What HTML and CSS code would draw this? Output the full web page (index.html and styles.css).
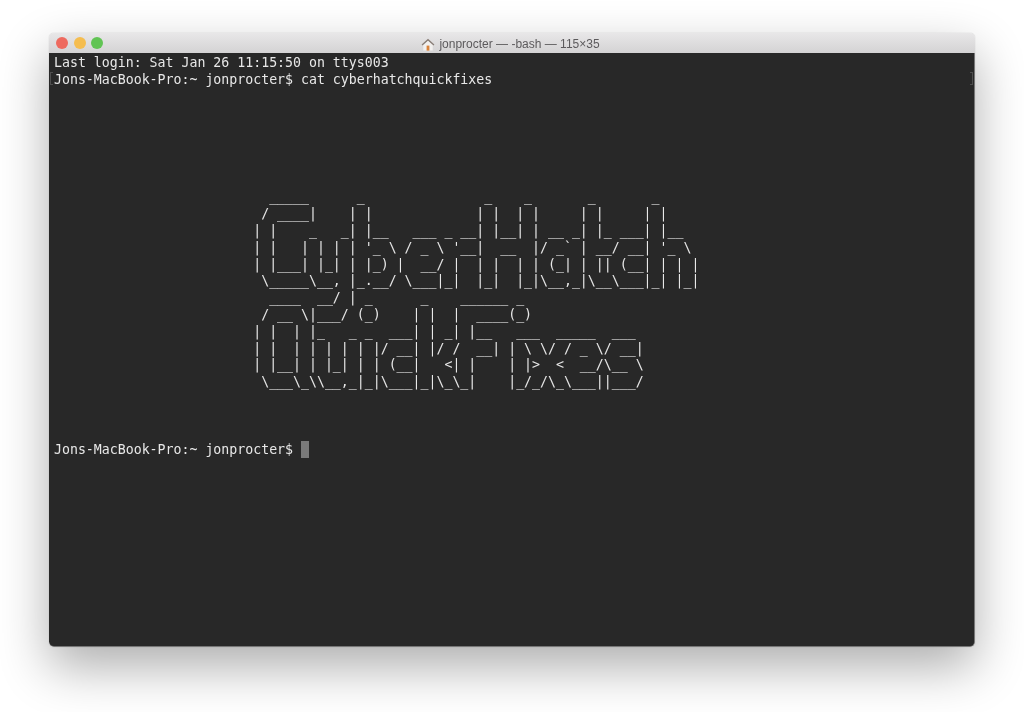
FILE: index.html
```html
<!DOCTYPE html>
<html lang="en">
<head>
    <meta charset="UTF-8">
    <meta name="viewport" content="width=device-width, initial-scale=1.0">
    <title>jonprocter — -bash — 115×35</title>
    <link rel="stylesheet" href="styles.css">
</head>
<body>
    <div class="window">
        <div class="titlebar">
            <div class="lights">
                <span class="light red"></span>
                <span class="light yellow"></span>
                <span class="light green"></span>
            </div>
            <div class="title">
                <svg class="home" width="14" height="13" viewBox="0 0 14 13">
                    <path d="M7 0.8 L0.6 6.6 L1.5 7.6 L7 2.7 L12.5 7.6 L13.4 6.6 Z" fill="#8a7f78"/>
                    <path d="M2.3 7.2 L7 3 L11.7 7.2 V12.6 H2.3 Z" fill="#f2f0ee"/>
                    <rect x="5.6" y="7.6" width="2.8" height="5" fill="#d9823a"/>
                </svg>
                <span>jonprocter — -bash — 115×35</span>
            </div>
        </div>
        <div class="terminal">
            <span class="mark mark-left"></span>
            <span class="mark mark-right"></span>
<pre class="screen">Last login: Sat Jan 26 11:15:50 on ttys003
Jons-MacBook-Pro:~ jonprocter$ cat cyberhatchquickfixes






                           _____      _               _    _       _       _
                          / ____|    | |             | |  | |     | |     | |
                         | |    _   _| |__   ___ _ __| |__| | __ _| |_ ___| |__
                         | |   | | | | '_ \ / _ \ '__|  __  |/ _` | __/ __| '_ \
                         | |___| |_| | |_) |  __/ |  | |  | | (_| | || (__| | | |
                          \_____\__, |_.__/ \___|_|  |_|  |_|\__,_|\__\___|_| |_|
                           ____  __/ | _      _    ______ _
                          / __ \|___/ (_)    | |  |  ____(_)
                         | |  | |_   _ _  ___| | _| |__   ___  _____  ___
                         | |  | | | | | |/ __| |/ /  __| | \ \/ / _ \/ __|
                         | |__| | |_| | | (__|   &lt;| |    | |&gt;  &lt;  __/\__ \
                          \___\_\\__,_|_|\___|_|\_\_|    |_/_/\_\___||___/



Jons-MacBook-Pro:~ jonprocter$ <span class="cursor"></span></pre>
        </div>
    </div>
</body>
</html>
```

FILE: styles.css
```css
* {
    margin: 0;
    padding: 0;
    box-sizing: border-box;
}

body {
    background-color: #fff;
    padding: 33px 49px 0;
    height: 712px;
    overflow: hidden;
}

.window {
    height: 614px;
    border-radius: 5px;
    overflow: hidden;
    box-shadow: 0 20px 50px rgba(0, 0, 0, 0.32), 0 0 1px rgba(0, 0, 0, 0.3);
    display: flex;
    flex-direction: column;
}

.titlebar {
    height: 20px;
    background: linear-gradient(#e8e7e8, #d4d3d4);
    display: flex;
    align-items: center;
    justify-content: center;
    position: relative;
}

.lights {
    position: absolute;
    left: 7px;
    top: 4px;
    display: flex;
    gap: 5.5px;
    filter: blur(0.3px);
}

.light {
    width: 12px;
    height: 12px;
    border-radius: 50%;
}

.red { background-color: #ee6a5f; }
.yellow { background-color: #f5bd4f; }
.green { background-color: #61c454; }

.title {
    display: flex;
    align-items: center;
    gap: 4px;
    font-family: "Liberation Sans", Arial, sans-serif;
    font-size: 12px;
    color: #5c5a5c;
    margin-top: 2px;
    margin-left: -3px;
    filter: blur(0.3px);
}

.terminal {
    flex: 1;
    background-color: #282828;
    position: relative;
    padding: 0 5px;
    border-right: 1px solid #777;
    border-bottom: 1px solid #777;
    border-radius: 0 0 5px 5px;
}

.screen {
    font-family: "DejaVu Sans Mono", monospace;
    font-size: 13.24px;
    line-height: 16.8px;
    color: #e8e8e8;
    padding-top: 2px;
    filter: blur(0.35px);
}

.cursor {
    display: inline-block;
    width: 8px;
    height: 17px;
    background-color: #7a7a7a;
    vertical-align: -4px;
}

.mark {
    position: absolute;
    top: 19px;
    width: 3px;
    height: 13px;
    border: 1px solid #4e4e4e;
}

.mark-left {
    left: 1px;
    border-right: none;
}

.mark-right {
    right: 1px;
    border-left: none;
}
```
